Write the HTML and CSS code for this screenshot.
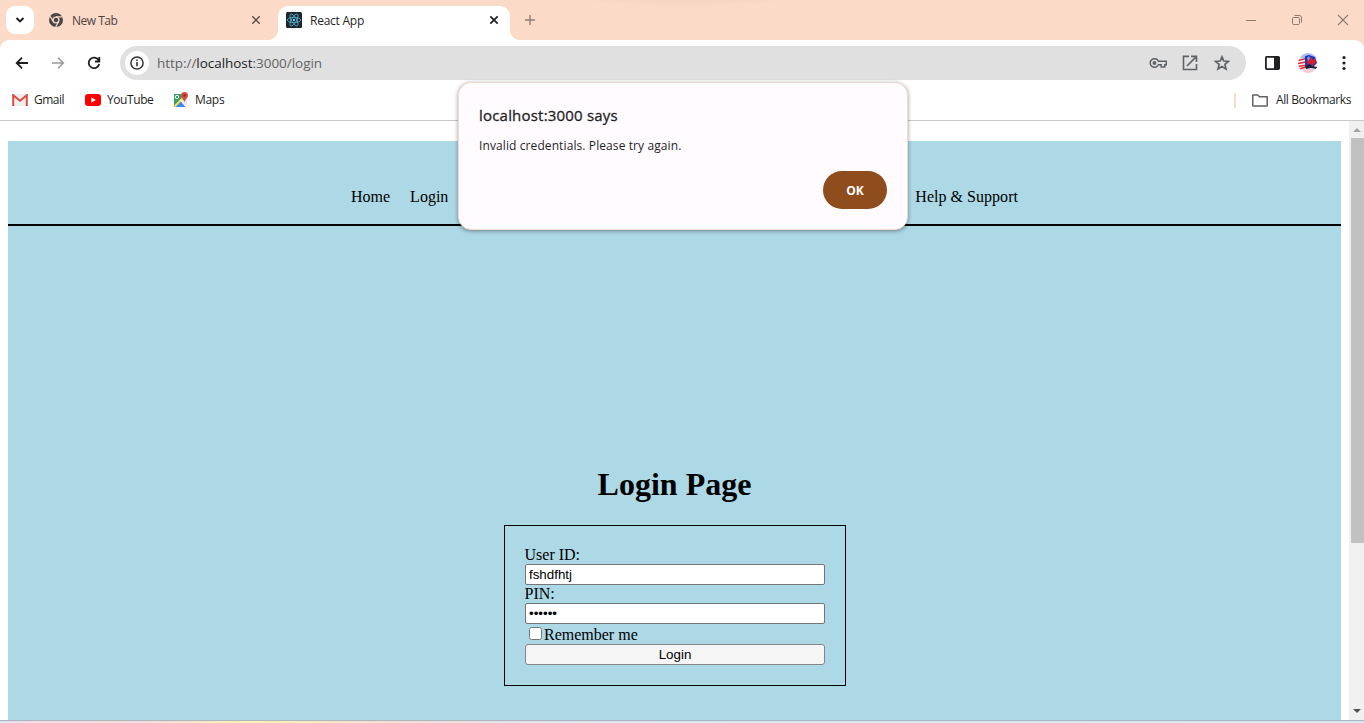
FILE: index.html
```html
<!DOCTYPE html>
<html lang="en">
<head>
<meta charset="utf-8">
<title>React App</title>
<link rel="stylesheet" href="styles.css">
</head>
<body>
<div class="window">
  <header class="tabstrip">
    <button class="tab-search" aria-label="Search tabs"><svg width="10" height="8" viewBox="0 0 10 8"><path d="M1.500 2 5 5.400 8.500 2" fill="none" stroke="#1f1f1f" stroke-width="2"/></svg></button>
    <div class="tab">
      <svg class="favicon" width="14" height="14" viewBox="0 0 14 14"><circle cx="7" cy="7" r="7" fill="#474747"/><circle cx="7" cy="7" r="2.900" fill="#474747" stroke="#fcdac8" stroke-width="1.300"/><path d="M7 3.800h6.500M4.200 8.500 1.300 3.400M9.800 8.500 6.700 13.900" stroke="#fcdac8" stroke-width="1.200"/></svg>
      <span class="tab-title t-new">New Tab</span>
      <svg class="tab-close" width="10" height="10" viewBox="0 0 10 10"><path d="m1.300 1.300 7.400 7.400M8.700 1.300 1.300 8.700" stroke="#5a514c" stroke-width="1.500"/></svg>
    </div>
    <div class="tab active">
      <svg class="favicon" width="16" height="16" viewBox="0 0 16 16"><rect width="16" height="16" rx="1.500" fill="#20232a"/><g fill="none" stroke="#53b5d0" stroke-width=".85"><ellipse cx="8" cy="8" rx="6.700" ry="2.600"/><ellipse cx="8" cy="8" rx="6.700" ry="2.600" transform="rotate(60 8 8)"/><ellipse cx="8" cy="8" rx="6.700" ry="2.600" transform="rotate(120 8 8)"/></g><circle cx="8" cy="8" r="1.200" fill="#61dafb"/></svg>
      <span class="tab-title t-react">React App</span>
      <svg class="tab-close" width="10" height="10" viewBox="0 0 10 10"><path d="m1.300 1.300 7.400 7.400M8.700 1.300 1.300 8.700" stroke="#1f1f1f" stroke-width="1.700"/></svg>
    </div>
    <svg class="new-tab" width="10" height="10" viewBox="0 0 10 10"><path d="M5 0v10M0 5h10" stroke="#8b7e77" stroke-width="1.400"/></svg>
    <div class="controls">
      <svg width="12" height="12" viewBox="0 0 12 12"><path d="M1 6.500h10" stroke="#8d7b71"/></svg>
      <svg width="12" height="12" viewBox="0 0 12 12"><rect x="1.500" y="3.500" width="7" height="7" rx="1.200" fill="none" stroke="#8d7b71"/><path d="M3.500 1.500h5a2 2 0 0 1 2 2v5" fill="none" stroke="#8d7b71"/></svg>
      <svg width="12" height="12" viewBox="0 0 12 12"><path d="m1 1 10 10M11 1 1 11" stroke="#8d7b71" stroke-width="1.100"/></svg>
    </div>
  </header>

  <div class="chrome">
    <div class="toolbar">
      <svg class="nav-icon" width="14" height="14" viewBox="0 0 14 14"><path d="M13 7H2M7 1.700 1.700 7 7 12.300" fill="none" stroke="#1f1f1f" stroke-width="1.800"/></svg>
      <svg class="nav-icon" width="14" height="14" viewBox="0 0 14 14"><path d="M1 7h11M7 1.700 12.300 7 7 12.300" fill="none" stroke="#9b9b9b" stroke-width="1.600"/></svg>
      <svg class="nav-icon" width="14" height="14" viewBox="0 0 14 14"><path d="M11.700 4.400A5.300 5.300 0 1 0 12.200 8M12.300 1v4.500H8" fill="none" stroke="#1f1f1f" stroke-width="1.800"/></svg>
      <div class="omnibox">
        <span class="site-info"><svg width="14" height="14" viewBox="0 0 14 14"><circle cx="7" cy="7" r="6.100" fill="none" stroke="#333" stroke-width="1.500"/><path d="M7 6v4.300M7 3.400v1.700" stroke="#333" stroke-width="1.600"/></svg></span>
        <span class="url">http://<b>localhost</b>:3000/login</span>
        <svg class="key" width="18" height="12" viewBox="0 0 18 12"><path d="M9.400 4.300A4.300 4.300 0 1 0 9.400 7.700H12.200V10h3.600V7.700H17.300V4.300Z" fill="none" stroke="#5f6368" stroke-width="1.500"/><circle cx="5.400" cy="6" r="1.900" fill="#5f6368"/></svg>
        <svg class="share" width="16" height="16" viewBox="0 0 16 16"><path d="M7 1.400H1.500v13.100h13V9M9 1.400h5.500V7M14.300 1.600 5 11" fill="none" stroke="#5f6368" stroke-width="1.600"/></svg>
        <svg class="star" width="16" height="16" viewBox="0 0 16 16"><path d="m8 1.800 1.800 4.200 4.600.4-3.500 3 1.100 4.500L8 11.500l-4 2.400 1.100-4.500-3.500-3 4.600-.4Z" fill="none" stroke="#5f6368" stroke-width="1.700"/></svg>
      </div>
      <svg class="panel" width="15" height="14" viewBox="0 0 15 14"><rect x=".9" y=".9" width="13.200" height="12.200" rx=".8" fill="#fff" stroke="#202124" stroke-width="1.800"/><path d="M9 1h5.500v12H9z" fill="#202124"/></svg>
      <svg class="avatar" width="20" height="20" viewBox="0 0 20 20"><defs><clipPath id="round"><circle cx="10" cy="10" r="10"/></clipPath></defs><g clip-path="url(#round)"><path fill="#f1edf2" d="M0 0h20v20H0z"/><path fill="#aebfef" d="M4 0h12l3 5H2z"/><path d="m0 7.500 8-2M0 10.500 8 9M0 13.500l9-1.500M1 16l7-2" stroke="#ed2734" stroke-width="1.500"/><path fill="#1836b8" d="m7 3 4-1 6 2 2 6-5 5H8l-1-5z"/><path fill="#db1d32" d="m11 5 2-1 2 3 2-2 1 5-3 1 1 3-2-1-2-3-2 3-1-4z"/><path fill="#6ea3ee" d="m9 5 2-2 1 2-2 3z"/><path fill="#17213d" d="m7 13 4-2 3 2 5 1v2l-6-1-5 1z"/><path fill="#f8ccd7" d="M4 16h13l-3 4H7z"/></g></svg>
      <svg class="more" width="4" height="16" viewBox="0 0 4 16"><g fill="#1f1f1f"><circle cx="2" cy="2.500" r="1.600"/><circle cx="2" cy="8" r="1.600"/><circle cx="2" cy="13.500" r="1.600"/></g></svg>
    </div>
    <nav class="bookmarks">
      <svg class="gmail" width="16" height="12" viewBox="0 0 16 12"><path fill="#eee" d="M1 0h14v12H1z"/><path d="M1.200 12V1.200L8 6.700l6.800-5.500V12" fill="none" stroke="#dc4c40" stroke-width="2"/></svg>
      <span class="b-gmail">Gmail</span>
      <svg class="youtube" width="16" height="12" viewBox="0 0 16 12"><rect width="16" height="12" rx="3" fill="#f00"/><path fill="#fff" d="m6.300 3.300 4.500 2.700-4.500 2.700z"/></svg>
      <span class="b-youtube">YouTube</span>
      <svg class="maps" width="16" height="16" viewBox="0 0 16 16"><path fill="#34a265" d="M1 2h12v13H1z"/><path fill="#e8e8e8" d="m8 8 6-1v8h-1z"/><path fill="#4285f4" d="m8 9 6 6H2z"/><path d="m1.500 14.500 10-10" stroke="#fddb4a" stroke-width="2"/><path d="m7.500 8 6 7" stroke="#fff" stroke-width="1.300"/><circle cx="4" cy="5" r="1.700" fill="none" stroke="#fff"/><path fill="#dc4b3e" d="M11.500 0A3.500 3.500 0 0 0 8 3.500c0 2.700 3 3.500 3.500 7 .5-3.500 3.500-4.300 3.500-7A3.500 3.500 0 0 0 11.500 0Z"/><circle cx="11.500" cy="3.500" r="1.200" fill="#862c27"/></svg>
      <span class="b-maps">Maps</span>
      <i class="divider"></i>
      <svg class="folder" width="16" height="13" viewBox="0 0 16 13"><path d="M.8 1h5l1.600 1.700h7.800v9.400H.8z" fill="none" stroke="#5f6368" stroke-width="1.500" stroke-linejoin="round"/></svg>
      <span class="b-all">All Bookmarks</span>
    </nav>
  </div>

  <div class="viewport">
    <main class="page">
      <nav class="site-nav"><a>Home</a><a>Login</a><a class="help">Help &amp; Support</a></nav>
      <h1>Login Page</h1>
      <form class="login">
        <label for="user">User ID:</label>
        <input class="field" id="user" type="text" value="fshdfhtj">
        <label for="pin">PIN:</label>
        <input class="field" id="pin" type="password" value="123456">
        <div class="remember"><input type="checkbox" id="remember"><label for="remember">Remember me</label></div>
        <button class="submit" type="button">Login</button>
      </form>
    </main>
    <div class="scrollbar">
      <svg width="15" height="17" viewBox="0 0 15 17"><path fill="#a3a3a3" d="m4 11 4-4 4 4z"/></svg>
      <div class="thumb"></div>
      <svg class="down" width="15" height="17" viewBox="0 0 15 17"><path fill="#505050" d="m4 6 4 4 4-4z"/></svg>
    </div>
  </div>
  <div class="taskbar"></div>

  <div class="dialog" role="alertdialog">
    <div class="dialog-title">localhost:3000 says</div>
    <div class="dialog-message">Invalid credentials. Please try again.</div>
    <button class="ok">OK</button>
  </div>
</div>
</body>
</html>
```
FILE: styles.css
```css
* { box-sizing: border-box; }
body { margin: 0; overflow: hidden; }
svg { display: block; flex: none; }
button { font: inherit; border: 0; padding: 0; }
.window {
  position: relative;
  width: 1364px;
  height: 723px;
  display: flex;
  flex-direction: column;
  background: #fcdac8;
  font: 12px "Open Sans", "Noto Sans", sans-serif;
  color: #1f1f1f;
  white-space: nowrap;
}

/* Tab strip */
.tabstrip {
  height: 40px;
  flex: none;
  display: flex;
  align-items: center;
  background: radial-gradient(ellipse 115px 8px at 685px -2px, #f5d1be, #fcdac8);
}
.tab-search {
  width: 28px;
  height: 28px;
  margin-left: 6px;
  border-radius: 9px;
  background: #fff;
  display: grid;
  place-items: center;
}
.tab {
  width: 244px;
  height: 34px;
  padding: 0 17px 0 15px;
  display: flex;
  align-items: center;
  color: #4c4542;
}
.tab .tab-title { margin-left: 9px; flex: 1; }
.t-new { letter-spacing: -.5px; }
.t-react { letter-spacing: -.25px; }
.tab.active {
  position: relative;
  width: 232px;
  padding: 0 11px 0 8px;
  align-self: flex-end;
  padding-bottom: 6px;
  border-radius: 10px 10px 0 0;
  background: #fff;
  color: #1f1f1f;
}
.tab.active .tab-title { margin-left: 8px; }
.tab.active::before, .tab.active::after {
  content: "";
  position: absolute;
  bottom: 0;
  width: 10px;
  height: 10px;
}
.tab.active::before { right: 100%; background: radial-gradient(circle at 0 0, transparent 9.5px, #fff 10.5px); }
.tab.active::after { left: 100%; background: radial-gradient(circle at 100% 0, transparent 9.5px, #fff 10.5px); }
.new-tab { margin-left: 15px; }
.controls { margin-left: auto; margin-right: 15px; display: flex; gap: 34px; }

/* Toolbar and bookmarks */
.chrome {
  height: 81px;
  flex: none;
  background: #fff;
  border-radius: 9px 9px 0 0;
  border-bottom: 1px solid #c9c9c9;
}
.toolbar { height: 46px; display: flex; align-items: center; padding-left: 15px; }
.nav-icon { margin-right: 22px; }
.omnibox {
  width: 1126px;
  height: 34px;
  margin-left: -3px;
  padding: 0 16px 0 5px;
  border-radius: 17px;
  background: #e0e0e0;
  display: flex;
  align-items: center;
}
.site-info {
  width: 24px;
  height: 24px;
  border-radius: 50%;
  background: #fff;
  display: grid;
  place-items: center;
}
.url { margin-left: 8px; font-size: 13.5px; letter-spacing: -.04px; color: #636363; flex: 1; }
.url b { font-weight: 400; color: #1f1f1f; }
.share { margin-left: 15px; }
.star { margin-left: 16px; }
.panel { margin-left: 18.500px; }
.avatar { margin-left: 18.500px; }
.more { margin-left: 24px; }
.bookmarks { height: 28px; display: flex; align-items: center; padding-left: 12px; }
.bookmarks span { margin-top: -1px; }
.b-gmail { margin-left: 6px; width: 31px; letter-spacing: -.5px; }
.youtube { margin-left: 20px; }
.b-youtube { margin-left: 6px; width: 46px; letter-spacing: -.42px; }
.maps { margin-left: 20px; }
.b-maps { margin-left: 6px; letter-spacing: -.3px; }
.divider { width: 2px; height: 15px; margin-left: auto; background: #fcdac8; }
.folder { margin-left: 16px; }
.b-all { margin-left: 8px; width: 76px; margin-right: 12px; letter-spacing: -.38px; }

/* Web page */
.viewport { height: 599px; flex: none; display: flex; background: #fff; }
.page {
  width: 1333px;
  height: 579px;
  margin: 20px 8px 0;
  background: #add8e6;
  font: 16px/18px "Liberation Serif", "Times New Roman", serif;
  color: #000;
}
.site-nav {
  height: 85px;
  padding: 47px 0 0 343px;
  border-bottom: 2px solid #000;
  display: flex;
  gap: 20px;
}
.site-nav .help { margin-left: 447px; letter-spacing: .03px; }
h1 { margin: 240px 0 0; font-size: 32px; line-height: 37px; text-align: center; }
.login {
  width: 342px;
  height: 161px;
  margin: 22px 0 0 496px;
  padding: 20px 20px 20px 19.500px;
  border: 1px solid #000;
  display: flex;
  flex-direction: column;
}
.login > .field {
  width: 300px;
  height: 21px;
  margin: 0 0 0 .5px;
  border: 1px solid #767676;
  border-radius: 2px;
  padding: 1px 3px;
  font: 13.333px "Liberation Sans", Arial, sans-serif;
  background: #fff;
  color: #000;
}
.remember { height: 20px; display: flex; align-items: center; }
.remember input { width: 13px; height: 13px; margin: -1px 2px 0 4.500px; }
.remember label { padding-top: 2px; }
.submit {
  width: 300px;
  margin-left: .5px;
  height: 21px;
  border: 1px solid #858585;
  border-radius: 3px;
  background: #f5f5f5;
  font: 13.333px "Liberation Sans", Arial, sans-serif;
  color: #000;
}
.scrollbar { width: 15px; background: #f0f0f0; display: flex; flex-direction: column; }
.thumb { width: 13px; height: 405px; margin-left: 2px; background: #c1c1c1; }
.down { margin-top: auto; }
.taskbar {
  height: 3px;
  border-top: 1px solid #aeb6bd;
  background: linear-gradient(90deg, #dfe4f5, #f4dce6 35px, #f5dcdb 150px, #fbf2b8 250px, #f3ddd5 400px, #dce7f2 560px, #d3e6f5);
}

/* Alert */
.dialog {
  position: absolute;
  left: 458px;
  top: 82px;
  width: 450px;
  height: 148px;
  padding: 22px 20px 20px;
  border: 1px solid #f0d9cf;
  border-radius: 13px;
  background: #fffbff;
  box-shadow: 0 1px 4px rgba(0, 0, 0, .4);
  display: flex;
  flex-direction: column;
}
.dialog-title { font-size: 15px; line-height: 20px; letter-spacing: .2px; -webkit-text-stroke: .3px #1f1f1f; }
.dialog-message { margin-top: 12px; line-height: 18px; letter-spacing: .1px; }
.ok {
  align-self: flex-end;
  width: 64px;
  height: 38px;
  margin-top: 16px;
  border-radius: 19px;
  background: #8f4c1d;
  color: #fff;
  font-weight: 700;
}
```
